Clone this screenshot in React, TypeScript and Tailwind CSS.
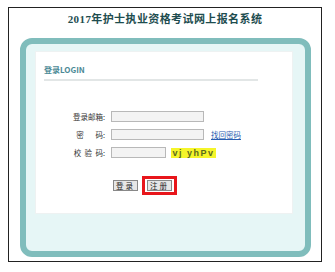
import React from 'react';

const labelFont = { fontFamily: '"Noto Sans CJK SC", "Liberation Sans", sans-serif' };

const App: React.FC = () => {
  return (
    <div className="w-[335px] h-[272px] bg-white pt-[7px] pl-[8px]" style={labelFont}>
      <div className="w-[314px] h-[255px] border border-[#222] flex flex-col">
        <h1
          className="text-center text-[11px] leading-[14px] font-bold text-[#1e4d4f] mt-[4px] tracking-[0.4px]"
          style={{ fontFamily: '"Liberation Serif", "Noto Sans CJK SC", serif' }}
        >
          2017年护士执业资格考试网上报名系统
        </h1>

        <div className="ml-[11px] mt-[12px] w-[291px] h-[219px] border-[6px] border-[#80bdbc] rounded-[12px] bg-[#e6f6f6] pl-[9px] pt-[7px]">
          <div className="w-[258px] h-[163px] bg-white border border-[#eef2f2] flex flex-col">
            <div className="pl-[8px] pt-[13px] text-[8px] leading-[10px] font-bold text-[#4c8a96]">
              登录LOGIN
            </div>
            <div className="ml-[8px] mt-[4px] w-[214px] h-[2px] bg-[#e2e6e6]" />

            <div className="mt-[30px] flex flex-col gap-[7px] text-[7.5px] leading-[11px] text-[#333]">
              <div className="flex items-center">
                <span className="w-[69px] text-right">登录邮箱:</span>
                <span className="ml-[6px] w-[93px] h-[11px] border border-[#b8b8b8] bg-[#f3f3f3]" />
              </div>
              <div className="flex items-center">
                <span className="w-[69px] text-right whitespace-pre">密       码:</span>
                <span className="ml-[6px] w-[93px] h-[11px] border border-[#b8b8b8] bg-[#f3f3f3]" />
                <a className="ml-[7px] text-[#2a5db0] underline text-[7.5px]">找回密码</a>
              </div>
              <div className="flex items-center">
                <span className="w-[69px] text-right whitespace-pre">校  验  码:</span>
                <span className="ml-[6px] w-[55px] h-[11px] border border-[#b8b8b8] bg-[#f3f3f3]" />
                <span
                  className="ml-[5px] w-[45px] h-[10px] bg-[#f5f52a] text-[#5a6a1c] font-bold text-[9px] leading-[10px] text-center tracking-[1.5px]"
                  style={{ fontFamily: '"Liberation Sans", sans-serif' }}
                >
                  vj yhPv
                </span>
              </div>
            </div>

            <div className="mt-[18px] ml-[77px] flex items-center text-[7.5px] text-[#222]">
              <button className="w-[25px] h-[11px] leading-[9px] border border-[#888] bg-[#e6e6e6] tracking-[2px]">
                登录
              </button>
              <div className="ml-[4px] border-[3px] border-[#e8161b] px-[2px] py-[1px]">
                <button className="w-[25px] h-[11px] leading-[9px] border border-[#888] bg-[#e6e6e6] tracking-[2px]">
                  注册
                </button>
              </div>
            </div>
          </div>
        </div>
      </div>
    </div>
  );
};

export default App;
